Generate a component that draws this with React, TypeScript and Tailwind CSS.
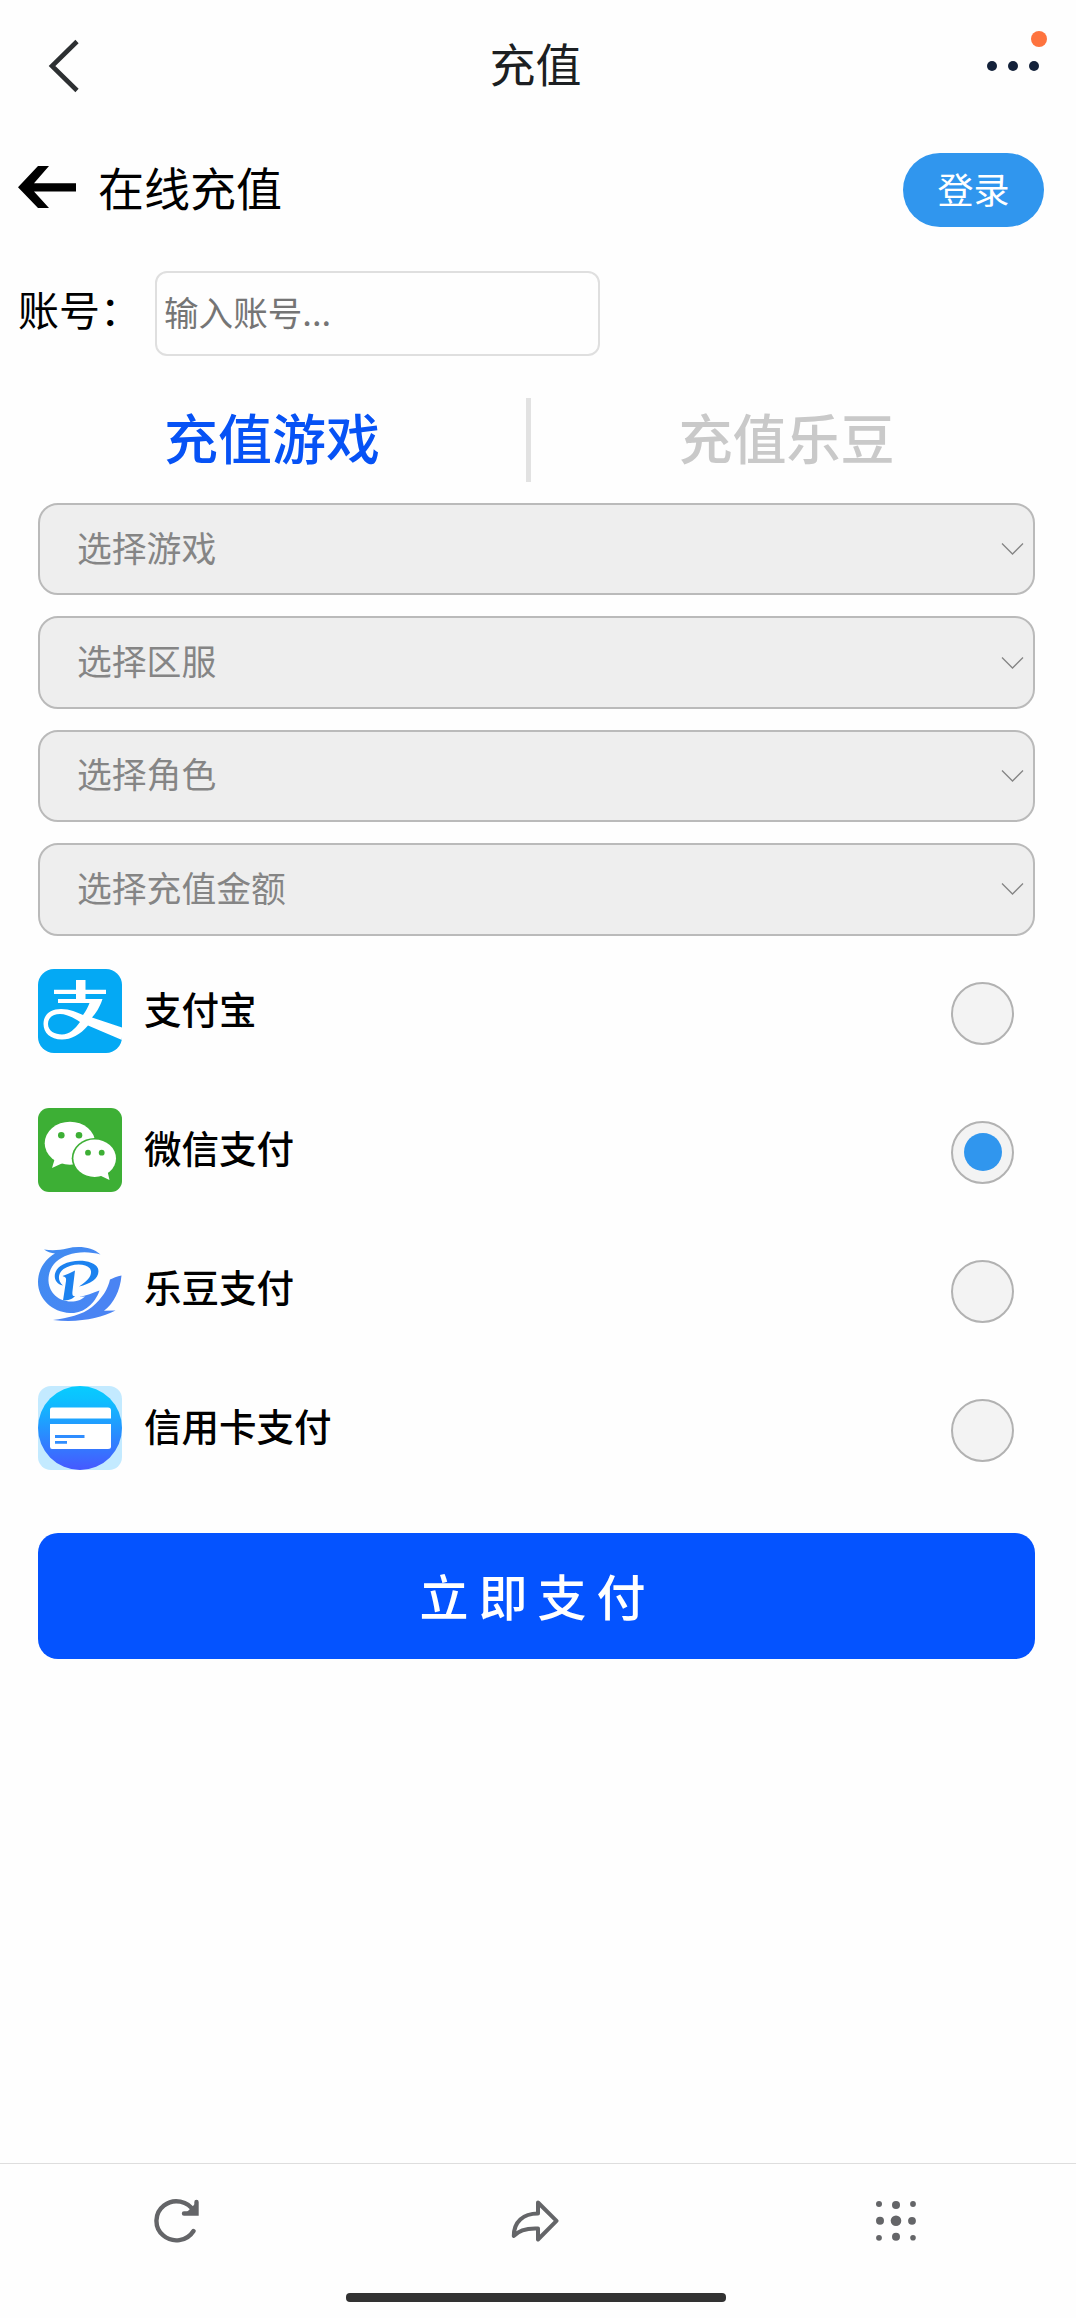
import { useState } from "react";
import type { ReactNode } from "react";

const selects = ["选择游戏", "选择区服", "选择角色", "选择充值金额"];

function AlipayIcon() {
  return (
    <svg viewBox="0 0 84 84" className="size-[84px] shrink-0">
      <clipPath id="alipay-clip">
        <rect width="84" height="84" rx="16" />
      </clipPath>
      <g clipPath="url(#alipay-clip)">
        <rect width="84" height="84" fill="#04a9f4" />
        <path
          fill="#fff"
          fillRule="evenodd"
          d="M38 11H47.500V20.700H68V25H47.500V30H64.500C61.500 39 58 44 54 48.500L84 58.500V71L50 56.500C42 66 33 70.500 24 70.500C12 70.500 5.500 63.500 5.500 55C5.500 45 13 40 23 40C32 40 39 43.500 45 46C48 42 50 38 51.500 34H20V30H38V25H16V20.700H38ZM42 53C36 49 29 45 22 45C15 45 10 48.500 10 55C10 62 17 65.500 24 65.500C31 65.500 37 60 42 53Z"
        />
      </g>
    </svg>
  );
}

function WechatIcon() {
  return (
    <svg viewBox="0 0 84 84" className="size-[84px] shrink-0">
      <rect width="84" height="84" rx="11" fill="#3daf35" />
      <g fill="#fff">
        <ellipse cx="32" cy="35.200" rx="25.300" ry="21.500" />
        <path d="M17 50L14 60L27 54Z" />
      </g>
      <ellipse cx="56.700" cy="50.300" rx="23" ry="20.400" fill="#3daf35" />
      <g fill="#fff">
        <ellipse cx="56.700" cy="50.300" rx="21.300" ry="18.700" />
        <path d="M61 67L71.500 72L69 61Z" />
      </g>
      <g fill="#3daf35">
        <circle cx="23.300" cy="27.300" r="3.300" />
        <circle cx="41" cy="27.300" r="3.300" />
        <circle cx="50" cy="44.700" r="2.900" />
        <circle cx="63.700" cy="44.700" r="2.900" />
      </g>
    </svg>
  );
}

function LedouIcon() {
  return (
    <svg viewBox="0 0 84 84" className="size-[84px] shrink-0">
      <defs>
        <linearGradient id="ledou-ring" x1="0" y1="0" x2="1" y2="1">
          <stop offset="0" stopColor="#3f8cf0" />
          <stop offset="1" stopColor="#4a86f5" />
        </linearGradient>
      </defs>
      <path
        fill="url(#ledou-ring)"
        d="M6 2.500C15 4 22 3 29 1.500C41 -1.500 54 0 62.500 7.500C53 4.500 40 4 30 8C17 12.500 10 22 10.500 34C11 46 21 54.500 33 54.500C39 54.500 44 52.500 47 49.500L41 50C48 48.500 55 46 61.500 43.500C57 57 45 67 32 66C14 65 0 52 0 35C0 23 7 12 17 6.500C13 6 9 5 6 2.500Z"
      />
      <path
        fill="#4a84f3"
        d="M83.500 28.500C82 44 76 56 66 63.800L77.500 63.500C62 71 42 76 15 73C30 71 44 68 54 60C64 51.500 70 42 72 32.500C75 31 79 29.500 83.500 28.500Z"
      />
      <path
        fill="#1c82ef"
        d="M25 38.500C14 36 14 23 25 17.500C37 11.500 56 13 60 21.500C62.500 30 54 36.500 41 39.500C50 34 55.500 27.500 52 21.500C47 15.500 33 16.500 25.500 22C19.500 26.500 19.500 34 25 38.500Z"
      />
      <path
        fill="#1c82ef"
        d="M24.500 29C29 27.500 33 25.500 37 23.500L34.500 44C34 48.500 35 49.500 37 49C34 52.500 30 53.500 25 53.500L28 34C28.500 31 27.500 30 24.500 29Z"
      />
    </svg>
  );
}

function CardIcon() {
  return (
    <svg viewBox="0 0 84 84" className="size-[84px] shrink-0">
      <defs>
        <linearGradient id="card-disc" x1="0" y1="0" x2="0" y2="1">
          <stop offset="0" stopColor="#08ccff" />
          <stop offset="0.15" stopColor="#0cc2ff" />
          <stop offset="1" stopColor="#4658ff" />
        </linearGradient>
      </defs>
      <rect width="84" height="84" rx="13" fill="#c3eaff" />
      <circle cx="42" cy="42" r="42" fill="url(#card-disc)" />
      <path fill="#fff" d="M14 21.500H70Q73 21.500 73 24.500V32.500H12V23.500Q12 21.500 14 21.500Z" />
      <path fill="#fff" d="M12 38H73V60.500Q73 63 70 63H14Q12 63 12 60.500Z" />
      <path stroke="#2f8dff" strokeWidth="2.800" d="M17 50.500H46.500M17 56.300H29" />
    </svg>
  );
}

const methods: { label: string; icon: ReactNode }[] = [
  { label: "支付宝", icon: <AlipayIcon /> },
  { label: "微信支付", icon: <WechatIcon /> },
  { label: "乐豆支付", icon: <LedouIcon /> },
  { label: "信用卡支付", icon: <CardIcon /> },
];

export default function App() {
  const [method, setMethod] = useState(1);

  return (
    <div className="flex min-h-[2318px] w-full flex-col bg-[#fefefe] font-['Noto_Sans_CJK_SC',sans-serif] text-black">
      <header className="grid h-[132px] grid-cols-3 items-center">
        <svg viewBox="0 0 34 56" className="ml-[46px] h-[56px] w-[34px]" fill="none">
          <path d="M31 3.500L6 28L31 52.500" stroke="#2d3032" strokeWidth="4.600" />
        </svg>
        <h1 className="pb-[8px] pr-[5px] text-center text-[46px] leading-[60px] text-[#1c1f22]">充值</h1>
        <div className="relative mr-[37px] flex gap-[11px] justify-self-end">
          <i className="size-[10px] rounded-full bg-[#13213a]" />
          <i className="size-[10px] rounded-full bg-[#13213a]" />
          <i className="size-[10px] rounded-full bg-[#13213a]" />
          <i className="absolute -right-[8px] -top-[30px] size-[16px] rounded-full bg-[#fe733e]" />
        </div>
      </header>

      <div className="mt-[21px] flex h-[74px] items-center pl-[18px] pr-[32px]">
        <svg viewBox="0 0 58 44" className="mb-[7px] h-[44px] w-[58px]" fill="none">
          <path d="M20 1H31L16 18.200H58V26.500H16L31 43H20L0 22.300Z" fill="#000" />
        </svg>
        <h2 className="ml-[22px] pb-[8px] text-[46px] leading-[60px]">在线充值</h2>
        <button className="ml-auto h-[74px] w-[141px] rounded-full bg-[#3096ee] pb-[4px] text-[36px] leading-[48px] text-white">
          登录
        </button>
      </div>

      <label className="mt-[44px] flex h-[85px] items-center pl-[18px]">
        <span className="w-[137px] pb-[12px] text-[41px] leading-[60px]">账号：</span>
        <input
          placeholder="输入账号..."
          className="h-[85px] w-[445px] rounded-[12px] border-2 border-[#dfdfdf] bg-transparent pb-[6px] pl-[7px] text-[34.600px] placeholder:text-[#757575]"
        />
      </label>

      <div className="mt-[42px] flex h-[84px] items-center text-center text-[54px] font-medium leading-[70px]">
        <button className="w-[526px] pb-[6px] pl-[18px] text-[#0652f5]">充值游戏</button>
        <div className="h-full w-[5px] bg-[#e2e2e2]" />
        <button className="flex-1 pb-[6px] pr-[34px] text-[#c9c9c9]">充值乐豆</button>
      </div>

      <main className="mt-[21px] flex flex-col pl-[38px] pr-[41px]">
        <div className="flex flex-col gap-[21px]">
          {selects.map((s) => (
            <button
              key={s}
              className="flex h-[92.400px] items-center justify-between rounded-[20px] border-2 border-[#bababa] bg-[#eeeeee] pl-[37px] pr-[9px]"
            >
              <span className="pb-[5px] text-[34.800px] leading-[48px] text-[#858585]">{s}</span>
              <svg viewBox="0 0 23 14" className="h-[14px] w-[23px]" fill="none">
                <path d="M1 1.500L11.500 12L22 1.500" stroke="#858585" strokeWidth="1.300" />
              </svg>
            </button>
          ))}
        </div>

        <div className="mt-[33px] flex flex-col gap-[55px]">
          {methods.map((m, i) => (
            <button key={m.label} onClick={() => setMethod(i)} className="flex h-[84px] items-center">
              {m.icon}
              <span className="ml-[22px] pb-[6px] text-[37.500px] font-medium leading-[50px]">{m.label}</span>
              <span className="ml-auto mr-[21px] mt-[5px] flex size-[63px] items-center justify-center rounded-full border-2 border-[#b2b2b2] bg-[#f3f3f3]">
                {method === i && <span className="size-[38px] rounded-full bg-[#3096ee]" />}
              </span>
            </button>
          ))}
        </div>

        <button className="mt-[63px] h-[126px] rounded-[20px] bg-[#0453ff] pb-[2px] pl-[2px] text-[49px] font-medium leading-[64px] tracking-[10px] text-white">
          立即支付
        </button>
      </main>

      <footer className="mt-auto flex h-[155px] flex-col border-t border-[#dedede]">
        <nav className="grid grid-cols-3 items-center pt-[34px]">
          <svg viewBox="0 0 46 46" className="ml-[153px] size-[46px]" fill="none" stroke="#646568" strokeWidth="4.400" strokeLinecap="round">
            <path d="M40.500 33A20 19.500 0 1 1 41 13.500" />
            <path d="M43.500 4V15.500H31" />
            <path d="M42 9V14H37Z" fill="#646568" />
          </svg>
          <svg viewBox="0 0 48 46" className="ml-[152px] h-[46px] w-[48px]" fill="none" stroke="#646568" strokeWidth="4" strokeLinejoin="round">
            <path d="M27 4.500L45.500 22.800L27 41.500V30.500C16 30 8 32 2.800 38C2.800 24 12 15.500 27 15.500Z" />
          </svg>
          <svg viewBox="0 0 46 46" className="ml-[156px] size-[46px]" fill="#646568">
            <circle cx="6" cy="6" r="3" />
            <circle cx="23" cy="7" r="4" />
            <circle cx="40" cy="6" r="2.900" />
            <circle cx="7" cy="22.800" r="4" />
            <circle cx="23" cy="22.800" r="5.300" />
            <circle cx="39" cy="22.800" r="3.900" />
            <circle cx="6" cy="39.800" r="2.900" />
            <circle cx="23" cy="38.800" r="4" />
            <circle cx="40" cy="39.800" r="2.800" />
          </svg>
        </nav>
        <div className="mb-[16px] ml-[346px] mt-auto h-[9px] w-[380px] rounded-[4px] bg-[#323232]" />
      </footer>
    </div>
  );
}
